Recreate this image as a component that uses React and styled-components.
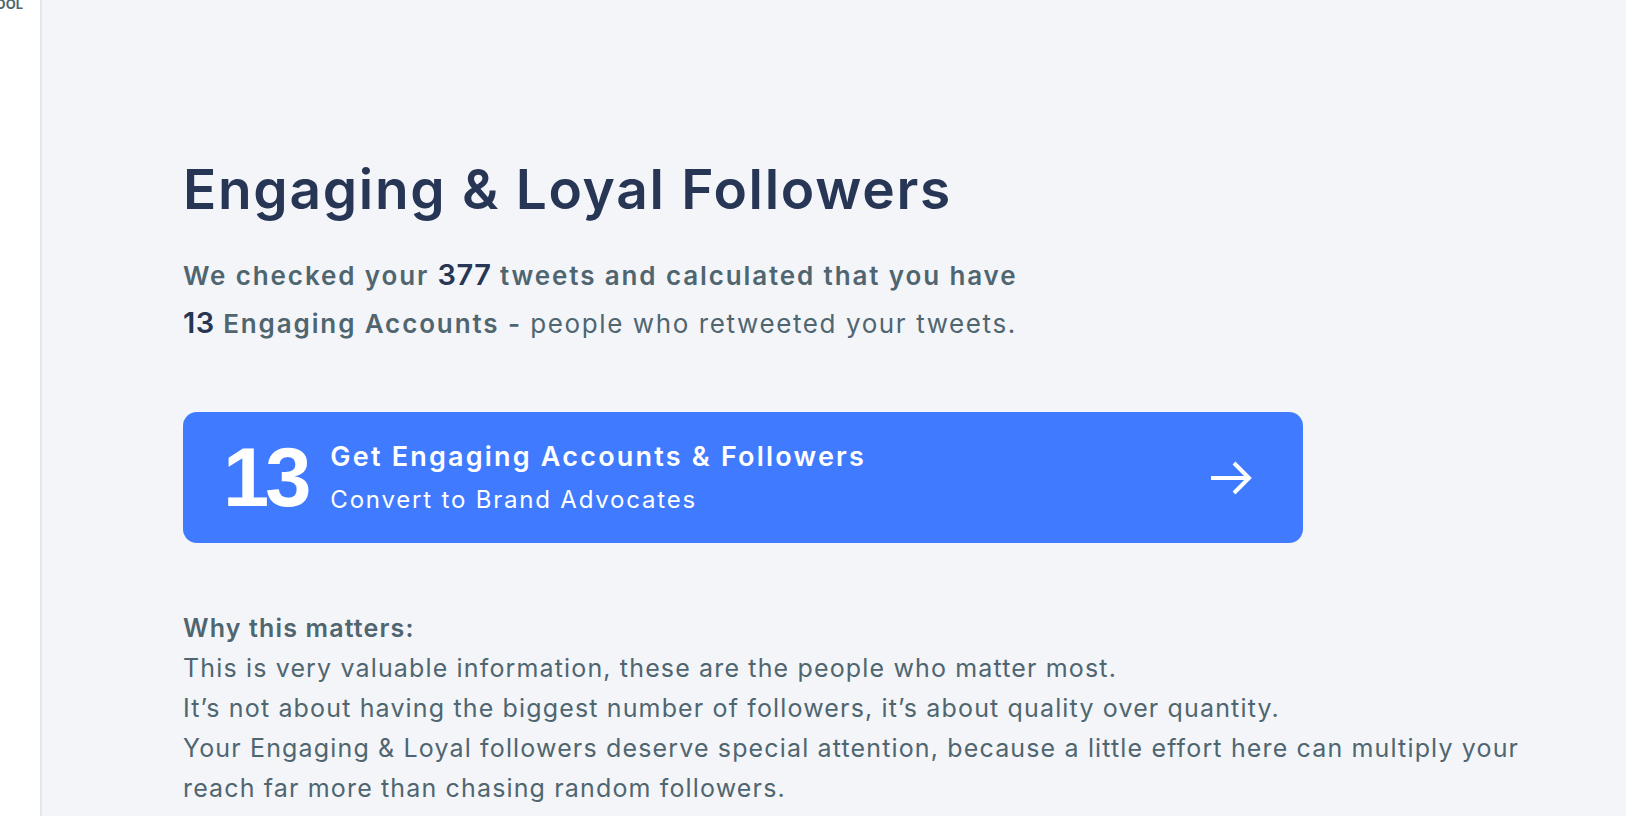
import React from 'react';
import styled, { createGlobalStyle } from 'styled-components';

const GlobalStyle = createGlobalStyle`
  html, body {
    margin: 0;
    padding: 0;
    background: #f4f5f9;
  }
  body {
    font-family: Inter, "Open Sans", sans-serif;
    overflow: hidden;
  }
`;

const Page = styled.div`
  display: flex;
  height: 100vh;
  width: 100vw;
`;

const Sidebar = styled.aside`
  width: 40px;
  flex-shrink: 0;
  background: #ffffff;
  border-right: 2px solid #e3e6ee;
  overflow: hidden;
  display: flex;
  justify-content: flex-end;
`;

const Brand = styled.span`
  margin: -4px 17px 0 0;
  font-size: 13px;
  font-weight: 700;
  color: #4f6670;
  white-space: nowrap;
  line-height: 16px;
`;

const Main = styled.main`
  flex: 1;
  padding: 156px 0 0 141px;
`;

const Title = styled.h1`
  margin: 0;
  font-size: 55px;
  line-height: 66px;
  font-weight: 600;
  color: #283655;
  letter-spacing: 1.7px;
`;

const Lead = styled.p`
  margin: 30px 0 0;
  font-size: 26px;
  line-height: 48px;
  font-weight: 600;
  color: #4f6670;
  letter-spacing: 1.88px;
`;

const Num = styled.span`
  font-size: 29px;
  line-height: 1;
  font-weight: 600;
  color: #283655;
  letter-spacing: 0.5px;
`;

const Light = styled.span`
  font-weight: 400;
  letter-spacing: 1.6px;
`;

const Card = styled.a`
  display: flex;
  align-items: center;
  box-sizing: border-box;
  width: 1120px;
  height: 131px;
  margin-top: 64px;
  padding: 0 50px 0 40px;
  border-radius: 14px;
  background: #407bff;
  color: #ffffff;
  cursor: pointer;
`;

const Count = styled.span`
  font-family: "Liberation Sans", Arial, sans-serif;
  font-size: 83px;
  font-weight: 700;
  line-height: 1;
  letter-spacing: -4px;
  margin-right: 23px;
`;

const CardText = styled.div`
  display: flex;
  flex-direction: column;
  flex: 1;
`;

const CardTitle = styled.span`
  font-size: 27px;
  font-weight: 600;
  line-height: 40px;
  letter-spacing: 2.2px;
`;

const CardSub = styled.span`
  margin-top: 5px;
  font-size: 24px;
  font-weight: 400;
  line-height: 36px;
  letter-spacing: 1.8px;
`;

const Section = styled.div`
  max-width: 1340px;
  margin-top: 65px;
  font-size: 25px;
  line-height: 40px;
  color: #4f6670;
  letter-spacing: 1.15px;
`;

const SectionHead = styled.div`
  font-weight: 600;
`;

const Arrow = () => (
  <svg width="44" height="34" viewBox="0 0 44 34" fill="none">
    <path d="M2 17H41M25 2L40 17L25 32" stroke="#ffffff" strokeWidth="4" />
  </svg>
);

export default function App() {
  return (
    <>
      <GlobalStyle />
      <Page>
        <Sidebar>
          <Brand>TOOL</Brand>
        </Sidebar>
        <Main>
          <Title>Engaging &amp; Loyal Followers</Title>
          <Lead>
            We checked your <Num>377</Num> tweets and calculated that you have
            <br />
            <Num>13</Num> Engaging Accounts - <Light>people who retweeted your tweets.</Light>
          </Lead>
          <Card>
            <Count>13</Count>
            <CardText>
              <CardTitle>Get Engaging Accounts &amp; Followers</CardTitle>
              <CardSub>Convert to Brand Advocates</CardSub>
            </CardText>
            <Arrow />
          </Card>
          <Section>
            <SectionHead>Why this matters:</SectionHead>
            This is very valuable information, these are the people who matter most.
            <br />
            It’s not about having the biggest number of followers, it’s about quality over quantity.
            <br />
            Your Engaging &amp; Loyal followers deserve special attention, because a little effort here can multiply your reach far more than chasing random followers.
          </Section>
        </Main>
      </Page>
    </>
  );
}
